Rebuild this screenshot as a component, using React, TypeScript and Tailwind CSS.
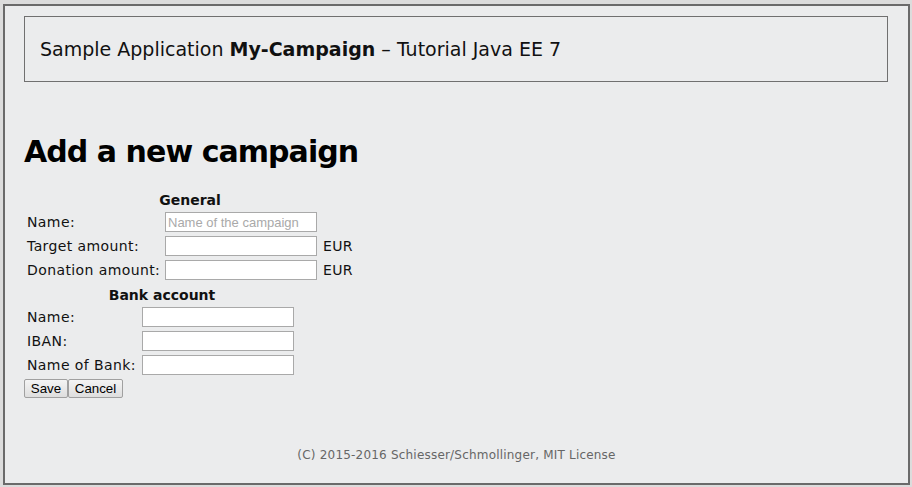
import React from 'react';

const Field = ({ label, width, placeholder, unit }: { label: string; width: string; placeholder?: string; unit?: string }) => (
  <div className="flex h-[24px] items-center">
    <span className={`${width} shrink-0 pl-[3px] text-[14px] tracking-[0.4px] text-[#111]`}>{label}</span>
    <input
      placeholder={placeholder}
      className="h-[20px] w-[152px] border border-[#a9a9a9] bg-white px-[2px] font-['Liberation_Sans',Arial,sans-serif] text-[13px] text-black outline-none placeholder:text-[#a9a9a9]"
    />
    {unit && <span className="ml-[6px] text-[14px] tracking-[0.3px] text-[#111]">{unit}</span>}
  </div>
);

const App = () => {
  return (
    <div className="h-[487px] w-[912px] overflow-hidden bg-[#dcdcdc] pt-[4px] font-['DejaVu_Sans',Verdana,sans-serif]">
      <div className="ml-[3px] flex h-[481px] w-[907px] flex-col border-2 border-[#6a6a6a] bg-[#ebeced]">
        {/* Header */}
        <div className="ml-[19px] mr-[20px] mt-[10px] flex h-[66px] items-center border border-[#707070] pl-[15px] text-[19px] text-[#111]">
          <span>
            Sample Application <b>My-Campaign</b> – Tutorial Java EE 7
          </span>
        </div>

        <h1 className="ml-[19px] mt-[52px] text-[30px] font-bold leading-[36px] tracking-[-0.95px] text-black">
          Add a new campaign
        </h1>

        {/* General */}
        <div className="ml-[19px] mt-[20px] w-[332px]">
          <div className="text-center text-[14px] font-bold leading-[20px] text-[#111]">General</div>
          <Field label="Name:" width="w-[141px]" placeholder="Name of the campaign" />
          <Field label="Target amount:" width="w-[141px]" unit="EUR" />
          <Field label="Donation amount:" width="w-[141px]" unit="EUR" />
        </div>

        {/* Bank account */}
        <div className="ml-[19px] mt-[3px] w-[276px]">
          <div className="text-center text-[14px] font-bold leading-[20px] text-[#111]">Bank account</div>
          <Field label="Name:" width="w-[118px]" />
          <Field label="IBAN:" width="w-[118px]" />
          <Field label="Name of Bank:" width="w-[118px]" />
        </div>

        <div className="ml-[19px] mt-[2px] flex font-['Liberation_Sans',Arial,sans-serif] text-[13.33px] text-black">
          <button className="h-[19px] w-[44px] rounded-[2px] border border-[#a0a0a0] bg-gradient-to-b from-[#f4f4f4] to-[#dedede] leading-[17px]">
            Save
          </button>
          <button className="h-[19px] w-[55px] rounded-[2px] border border-[#a0a0a0] bg-gradient-to-b from-[#f4f4f4] to-[#dedede] leading-[17px]">
            Cancel
          </button>
        </div>

        <div className="mt-[49px] text-center text-[12px] leading-[16px] tracking-[0.2px] text-[#666]">
          (C) 2015-2016 Schiesser/Schmollinger, MIT License
        </div>
      </div>
    </div>
  );
};

export default App;
